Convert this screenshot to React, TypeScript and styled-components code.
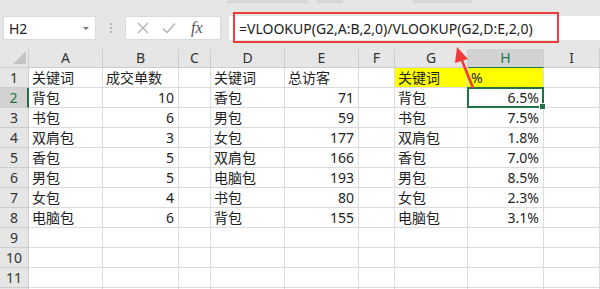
import React from "react";
import styled, { createGlobalStyle, css } from "styled-components";

const Global = createGlobalStyle`
  html, body { margin: 0; padding: 0; background: #ffffff; }
  body { font-family: "Noto Sans", "Noto Sans CJK SC", sans-serif; }
`;

const Page = styled.div`
  position: relative;
  width: 600px;
  height: 289px;
  overflow: hidden;
  background: #ffffff;
`;

const Top = styled.div`
  height: 49px;
  background: #e6e6e6;
  display: flex;
  flex-direction: column;
`;

const RibbonStrip = styled.div`
  height: 2px;
  display: flex;
`;

const RibbonStub = styled.div<{ $left: number; $w: number }>`
  margin-left: ${(p) => p.$left}px;
  width: ${(p) => p.$w}px;
  height: 2px;
  background: #d9d9d9;
  border-bottom: 1px solid #cfcfcf;
`;

const FormulaRow = styled.div`
  margin-top: 14px;
  height: 24px;
  display: flex;
  align-items: stretch;
  padding-left: 3px;
`;

const NameBox = styled.div`
  width: 93px;
  box-sizing: border-box;
  background: #ffffff;
  border: 1px solid #dadada;
  display: flex;
  align-items: center;
  justify-content: space-between;
  padding: 0 6px 0 5px;
  font-size: 14px;
  color: #222;
`;

const Caret = styled.span`
  width: 0;
  height: 0;
  border-left: 3px solid transparent;
  border-right: 3px solid transparent;
  border-top: 3px solid #777;
`;

const Dots = styled.div`
  width: 29px;
  display: flex;
  flex-direction: column;
  align-items: center;
  justify-content: center;
  gap: 2px;
`;

const Dot = styled.span`
  width: 2px;
  height: 2px;
  background: #b4b4b4;
`;

const ActionBox = styled.div`
  width: 96px;
  box-sizing: border-box;
  background: #ffffff;
  border: 1px solid #dadada;
  display: flex;
  align-items: center;
  padding-left: 11px;
  gap: 13px;
`;

const Fx = styled.span`
  font-family: "Liberation Serif", serif;
  font-style: italic;
  font-size: 16px;
  color: #555;
  margin-left: 2px;
`;

const FormulaInput = styled.div`
  flex: 1;
  margin-left: 8px;
  background: #ffffff;
  display: flex;
  align-items: center;
  padding-left: 10px;
  font-size: 14px;
  color: #222;
  white-space: nowrap;
`;

const Grid = styled.div`
  display: grid;
  grid-template-columns: 29px 74px 76px 32px 74px 74px 36px 73px 76px 56px;
  grid-template-rows: 19px repeat(12, 20px);
`;

const Cell = styled.div<{
  $align?: "left" | "right";
  $yellow?: boolean;
  $selected?: boolean;
}>`
  position: relative;
  box-sizing: border-box;
  border-right: 1px solid #dcdcdc;
  border-bottom: 1px solid #dcdcdc;
  font-size: 14px;
  color: #1e1e1e;
  line-height: 19px;
  padding: 0 4px 0 3px;
  white-space: nowrap;
  overflow: visible;
  text-align: ${(p) => p.$align ?? "left"};
  background: ${(p) => (p.$yellow ? "#ffff00" : "#ffffff")};
  ${(p) =>
    p.$selected &&
    css`
      &::after {
        content: "";
        position: absolute;
        left: -1px;
        top: -1px;
        right: -1px;
        bottom: -1px;
        border: 2px solid #217346;
        pointer-events: none;
      }
      &::before {
        content: "";
        position: absolute;
        right: -3px;
        bottom: -3px;
        width: 5px;
        height: 5px;
        background: #217346;
        border: 1px solid #fff;
        z-index: 2;
      }
    `}
`;

const ColHead = styled.div<{ $active?: boolean }>`
  box-sizing: border-box;
  background: ${(p) => (p.$active ? "#d2d2d2" : "#e6e6e6")};
  border-right: 1px solid #cdcdcd;
  border-bottom: 1px solid ${(p) => (p.$active ? "#217346" : "#cdcdcd")};
  font-size: 14px;
  line-height: 18px;
  text-align: center;
  color: ${(p) => (p.$active ? "#217346" : "#333")};
`;

const Corner = styled.div`
  position: relative;
  background: #e6e6e6;
  border-right: 1px solid #cdcdcd;
  border-bottom: 1px solid #cdcdcd;
  box-sizing: border-box;
  &::after {
    content: "";
    position: absolute;
    right: 2px;
    bottom: 3px;
    width: 0;
    height: 0;
    border-left: 13px solid transparent;
    border-bottom: 13px solid #c4c4c4;
  }
`;

const RowHead = styled.div<{ $active?: boolean }>`
  box-sizing: border-box;
  background: ${(p) => (p.$active ? "#d2d2d2" : "#e6e6e6")};
  border-right: ${(p) => (p.$active ? "2px solid #217346" : "1px solid #cdcdcd")};
  border-bottom: 1px solid #cdcdcd;
  font-size: 14px;
  line-height: 19px;
  text-align: center;
  color: ${(p) => (p.$active ? "#217346" : "#333")};
`;

const Overlay = styled.svg`
  position: absolute;
  left: 0;
  top: 0;
  pointer-events: none;
`;

type CellDef = { t?: string; r?: boolean; y?: boolean; sel?: boolean };

const cols = ["A", "B", "C", "D", "E", "F", "G", "H", "I"];

const colA = ["背包", "书包", "双肩包", "香包", "男包", "女包", "电脑包"];
const colB = ["10", "6", "3", "5", "5", "4", "6"];
const colD = ["香包", "男包", "女包", "双肩包", "电脑包", "书包", "背包"];
const colE = ["71", "59", "177", "166", "193", "80", "155"];
const colH = ["6.5%", "7.5%", "1.8%", "7.0%", "8.5%", "2.3%", "3.1%"];

const rows: CellDef[][] = [];
rows.push([
  { t: "关键词" },
  { t: "成交单数" },
  {},
  { t: "关键词" },
  { t: "总访客" },
  {},
  { t: "关键词", y: true },
  { t: "%", y: true },
  {},
]);
for (let i = 0; i < 7; i++) {
  rows.push([
    { t: colA[i] },
    { t: colB[i], r: true },
    {},
    { t: colD[i] },
    { t: colE[i], r: true },
    {},
    { t: colA[i] },
    { t: colH[i], r: true, sel: i === 0 },
    {},
  ]);
}
for (let i = 0; i < 4; i++) rows.push(cols.map(() => ({})));

const XIcon = () => (
  <svg width="12" height="12" viewBox="0 0 12 12">
    <path d="M1 1 L11 11 M11 1 L1 11" stroke="#b4b4b4" strokeWidth="1.4" fill="none" />
  </svg>
);

const CheckIcon = () => (
  <svg width="14" height="12" viewBox="0 0 14 12">
    <path d="M1 6.5 L5 10.5 L13 1.5" stroke="#b4b4b4" strokeWidth="1.4" fill="none" />
  </svg>
);

export default function App() {
  return (
    <Page>
      <Global />
      <Top>
        <RibbonStrip>
          <RibbonStub $left={227} $w={81} />
          <RibbonStub $left={9} $w={26} />
          <RibbonStub $left={70} $w={59} />
        </RibbonStrip>
        <FormulaRow>
          <NameBox>
            H2
            <Caret />
          </NameBox>
          <Dots>
            <Dot />
            <Dot />
            <Dot />
          </Dots>
          <ActionBox>
            <XIcon />
            <CheckIcon />
            <Fx>fx</Fx>
          </ActionBox>
          <FormulaInput>=VLOOKUP(G2,A:B,2,0)/VLOOKUP(G2,D:E,2,0)</FormulaInput>
        </FormulaRow>
      </Top>
      <Grid>
        <Corner />
        {cols.map((c) => (
          <ColHead key={c} $active={c === "H"}>
            {c}
          </ColHead>
        ))}
        {rows.map((row, ri) => (
          <React.Fragment key={ri}>
            <RowHead $active={ri === 1}>{ri < 11 ? ri + 1 : ""}</RowHead>
            {row.map((c, ci) => (
              <Cell key={ci} $align={c.r ? "right" : "left"} $yellow={c.y} $selected={c.sel}>
                {c.t}
              </Cell>
            ))}
          </React.Fragment>
        ))}
      </Grid>
      <Overlay width="600" height="289" viewBox="0 0 600 289">
        <rect x="234" y="13" width="324" height="29" fill="none" stroke="#ee3b3b" strokeWidth="2" />
        <path d="M473 88 L461 58" stroke="#ee3b3b" strokeWidth="2.6" fill="none" />
        <path d="M457 47 L468 59 L455 63 Z" fill="#ee3b3b" />
      </Overlay>
    </Page>
  );
}
